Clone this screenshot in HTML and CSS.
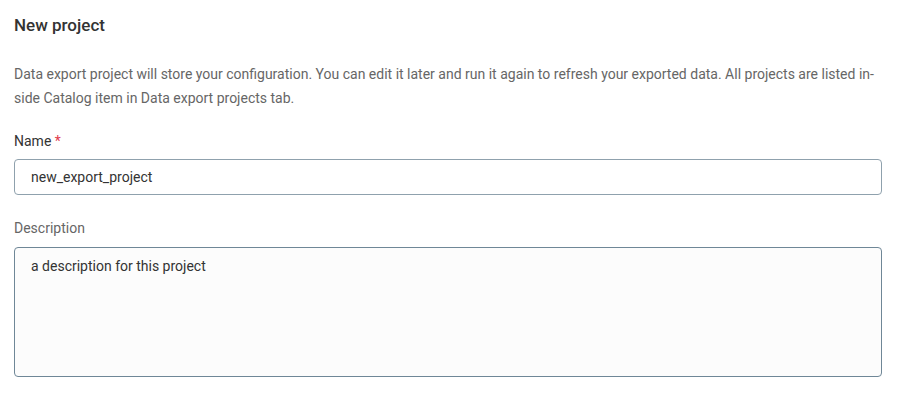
FILE: index.html
```html
<!DOCTYPE html>
<html lang="en">
<head>
	<meta charset="utf-8">
	<title>New project</title>
	<link rel="stylesheet" href="styles.css">
</head>
<body>
	<div class="project-form">
		<h2 class="form-title">New project</h2>
		<p class="form-intro">Data export project will store your configuration. You can edit it later and run it again to refresh your exported data. All projects are listed in-side Catalog item in Data export projects tab.</p>
		<div class="field">
			<label class="field-label" for="name">Name <span class="required">*</span></label>
			<input class="field-input" id="name" type="text" value="new_export_project">
		</div>
		<div class="field">
			<label class="field-label muted" for="desc">Description</label>
			<textarea class="field-area" id="desc">a description for this project</textarea>
		</div>
	</div>
</body>
</html>
```

FILE: styles.css
```css
*{
	margin:0;
	padding:0;
	box-sizing:border-box;
}
body{
	background:#fff;
	font-family:Roboto,"Liberation Sans",sans-serif;
	color:#333;
}
.project-form{
	padding:15px 17px 0 14px;
}
.form-title{
	font-size:17px;
	font-weight:500;
	line-height:20px;
	color:#333;
}
.form-intro{
	margin-top:27px;
	font-size:14px;
	line-height:24px;
	color:#666;
}
.field{
	margin-top:21px;
}
.field + .field{
	margin-top:23px;
}
.field-label{
	display:block;
	font-size:14px;
	line-height:20px;
	color:#333;
	margin-bottom:8px;
}
.field-label.muted{
	color:#666;
	margin-bottom:9px;
}
.required{
	color:#e0394d;
}
.field-input,
.field-area{
	display:block;
	width:100%;
	font-family:inherit;
	font-size:14px;
	color:#333;
	border-radius:4px;
	outline:none;
}
.field-input{
	height:36px;
	padding:0 16px;
	border:1px solid #8fa1ad;
	background:#fff;
}
.field-area{
	height:130px;
	padding:8px 16px;
	line-height:20px;
	border:1px solid #6f8797;
	background:#fcfcfc;
	resize:none;
}
```
